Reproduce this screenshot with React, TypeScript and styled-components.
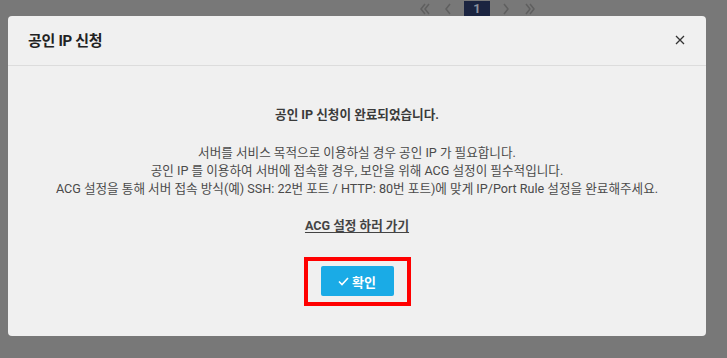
import React from "react";
import styled, { createGlobalStyle } from "styled-components";

const GlobalStyle = createGlobalStyle`
  html, body {
    margin: 0;
    padding: 0;
    background: #787878;
  }
  * {
    box-sizing: border-box;
  }
`;

const Page = styled.div`
  width: 727px;
  height: 358px;
  overflow: hidden;
  background: #787878;
  font-family: Roboto, "Noto Sans CJK KR", sans-serif;
`;

const Pager = styled.div`
  height: 16px;
  display: flex;
  align-items: flex-end;
  padding-left: 418px;
  overflow: hidden;
`;

const PagerArrow = styled.div<{ $w: number }>`
  width: ${(p) => p.$w}px;
  height: 15px;
  display: flex;
  align-items: center;
  justify-content: center;
  color: #5f5f5f;
`;

const PagerCurrent = styled.div`
  width: 26px;
  height: 15px;
  background: #1b2440;
  color: #8c929e;
  font-size: 13px;
  font-weight: 700;
  display: flex;
  align-items: flex-end;
  justify-content: center;
  line-height: 15px;
`;

const Modal = styled.div`
  margin-left: 8px;
  width: 698px;
  height: 320px;
  background: #f0f0f0;
  border-radius: 4px;
  display: flex;
  flex-direction: column;
`;

const Header = styled.div`
  height: 50px;
  border-bottom: 1px solid #dcdcdc;
  display: flex;
  align-items: center;
  justify-content: space-between;
  padding: 0 20px 2px 20px;
`;

const Title = styled.h4`
  margin: 0;
  font-size: 15px;
  font-weight: 700;
  color: #222;
  letter-spacing: -0.3px;
`;

const CloseButton = styled.button`
  border: 0;
  background: none;
  padding: 0;
  width: 12px;
  height: 12px;
  display: flex;
  align-items: center;
  justify-content: center;
  cursor: pointer;
`;

const Body = styled.div`
  flex: 1;
  display: flex;
  flex-direction: column;
  align-items: center;
  padding-top: 40px;
  color: #444;
  font-size: 12.6px;
  line-height: 18px;
  text-align: center;
`;

const Heading = styled.p`
  margin: 0;
  font-weight: 700;
  color: #3a3a3a;
`;

const Paragraph = styled.p`
  margin: 20px 0 0;
  color: #4a4a4a;
`;

const GuideLink = styled.a`
  margin-top: 19px;
  font-weight: 700;
  color: #444;
  text-decoration: underline;
  text-underline-offset: 2px;
  cursor: pointer;
`;

const Highlight = styled.div`
  margin-top: 22px;
  border: 4px solid #ff0000;
  padding: 5px 13px 6px 13px;
`;

const ConfirmButton = styled.button`
  width: 73px;
  height: 30px;
  border: 0;
  border-radius: 2px;
  background: #1aabe6;
  color: #fff;
  font-family: Roboto, "Noto Sans CJK KR", sans-serif;
  font-size: 13px;
  font-weight: 700;
  display: flex;
  align-items: center;
  justify-content: center;
  gap: 3px;
  cursor: pointer;
`;

const Chevron = ({ dir, double }: { dir: "l" | "r"; double?: boolean }) => {
  const single = dir === "l" ? "M6 2 L2 7 L6 12" : "M2 2 L6 7 L2 12";
  const second = dir === "l" ? "M10 2 L6 7 L10 12" : "M6 2 L10 7 L6 12";
  return (
    <svg width={double ? 12 : 8} height="14" viewBox={double ? "0 0 12 14" : "0 0 8 14"}>
      <path d={single} fill="none" stroke="currentColor" strokeWidth="1.5" />
      {double && <path d={second} fill="none" stroke="currentColor" strokeWidth="1.5" />}
    </svg>
  );
};

export default function App() {
  return (
    <Page>
      <GlobalStyle />
      <Pager>
        <PagerArrow $w={14}>
          <Chevron dir="l" double />
        </PagerArrow>
        <PagerArrow $w={32}>
          <Chevron dir="l" />
        </PagerArrow>
        <PagerCurrent>1</PagerCurrent>
        <PagerArrow $w={31}>
          <Chevron dir="r" />
        </PagerArrow>
        <PagerArrow $w={18}>
          <Chevron dir="r" double />
        </PagerArrow>
      </Pager>
      <Modal>
        <Header>
          <Title>공인 IP 신청</Title>
          <CloseButton aria-label="close">
            <svg width="10" height="10" viewBox="0 0 10 10">
              <path d="M1 1 L9 9 M9 1 L1 9" stroke="#333" strokeWidth="1.3" />
            </svg>
          </CloseButton>
        </Header>
        <Body>
          <Heading>공인 IP 신청이 완료되었습니다.</Heading>
          <Paragraph>
            서버를 서비스 목적으로 이용하실 경우 공인 IP 가 필요합니다.
            <br />
            공인 IP 를 이용하여 서버에 접속할 경우, 보안을 위해 ACG 설정이 필수적입니다.
            <br />
            ACG 설정을 통해 서버 접속 방식(예) SSH: 22번 포트 / HTTP: 80번 포트)에 맞게 IP/Port Rule 설정을 완료해주세요.
          </Paragraph>
          <GuideLink>ACG 설정 하러 가기</GuideLink>
          <Highlight>
            <ConfirmButton>
              <svg width="11" height="9" viewBox="0 0 11 9">
                <path d="M1 4.5 L4 7.5 L10 1" fill="none" stroke="#fff" strokeWidth="1.6" />
              </svg>
              확인
            </ConfirmButton>
          </Highlight>
        </Body>
      </Modal>
    </Page>
  );
}
